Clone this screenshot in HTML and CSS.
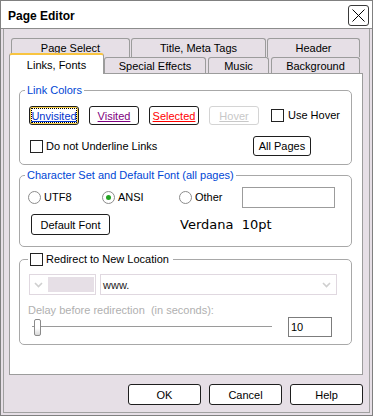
FILE: index.html
```html
<!DOCTYPE html>
<html lang="en">
  <head>
    <meta charset="UTF-8" />
    <title>Page Editor</title>
    <link rel="stylesheet" href="styles.css">
  </head>
  <body>
    <div class="window">
      <div class="titlebar">
        <span class="title">Page Editor</span>
        <span class="close">
          <svg width="19" height="19" viewBox="0 0 19 19">
            <path d="M3.5 3.5 L15.5 15.5 M15.5 3.5 L3.5 15.5" stroke="#000" stroke-width="1" fill="none" />
          </svg>
        </span>
      </div>

      <div class="body">
        <!-- Tab strip: two rows, the active one sits in front -->
        <div class="tabs">
          <div class="tab-row back">
            <div class="tab tab-page">Page Select</div>
            <div class="tab tab-meta">Title, Meta Tags</div>
            <div class="tab tab-header">Header</div>
          </div>
          <div class="tab-row front">
            <div class="tab tab-links active">Links, Fonts</div>
            <div class="tab tab-effects">Special Effects</div>
            <div class="tab tab-music">Music</div>
            <div class="tab tab-bg">Background</div>
          </div>
        </div>

        <div class="panel">
          <fieldset class="group group-links">
            <legend>Link Colors</legend>
            <div class="row row-colors">
              <button class="btn link-btn unvisited focused"><span>Unvisited</span></button>
              <button class="btn link-btn visited"><span>Visited</span></button>
              <button class="btn link-btn selected"><span>Selected</span></button>
              <button class="btn link-btn hover"><span>Hover</span></button>
              <span class="check use-hover"></span>
              <span class="label">Use Hover</span>
            </div>
            <div class="row row-underline">
              <span class="check no-underline"></span>
              <span class="label">Do not Underline Links</span>
              <button class="btn all-pages">All Pages</button>
            </div>
          </fieldset>

          <fieldset class="group group-charset">
            <legend>Character Set and Default Font (all pages)</legend>
            <div class="row row-charset">
              <span class="option opt-utf8"><span class="radio"></span><span class="label">UTF8</span></span>
              <span class="option opt-ansi"><span class="radio on"></span><span class="label">ANSI</span></span>
              <span class="option opt-other"><span class="radio"></span><span class="label">Other</span></span>
              <span class="textbox other-box"></span>
            </div>
            <div class="row row-font">
              <button class="btn default-font">Default Font</button>
              <span class="font-name">Verdana  10pt</span>
            </div>
          </fieldset>

          <fieldset class="group group-redirect">
            <legend><span class="check"></span><span class="label">Redirect to New Location</span></legend>
            <div class="row row-combos">
              <span class="combo combo-proto">
                <svg class="chevron" width="18" height="8" viewBox="0 0 18 8">
                  <polyline points="5,2 8.5,5.5 12,2" stroke="#cfcfcf" stroke-width="1.6" fill="none" />
                </svg>
                <span class="proto-field"></span>
              </span>
              <span class="combo combo-url">
                <span class="url-text">www.</span>
                <svg class="chevron" width="14" height="8" viewBox="0 0 14 8">
                  <polyline points="3,2 6.5,5.5 10,2" stroke="#cfcfcf" stroke-width="1.6" fill="none" />
                </svg>
              </span>
            </div>
            <div class="delay-label">Delay before redirection  (in seconds):</div>
            <div class="row row-slider">
              <span class="slider"><span class="thumb"></span></span>
              <span class="textbox delay-box">10</span>
            </div>
          </fieldset>
        </div>

        <div class="actions">
          <button class="btn">OK</button>
          <button class="btn">Cancel</button>
          <button class="btn">Help</button>
        </div>
      </div>
    </div>
  </body>
</html>
```

FILE: styles.css
```css
* {
  box-sizing: border-box;
}
body {
  margin: 0;
  font-family: "Liberation Sans", Arial, sans-serif;
  font-size: 11px;
  color: #000;
  background: #fff;
}
.window {
  width: 373px;
  height: 416px;
  border: 1px solid #808080;
  background: #e6dfe6;
  display: flex;
  flex-direction: column;
}

/* Title bar */
.titlebar {
  height: 28px;
  flex: none;
  background: #fff;
  border-bottom: 1px solid #8c8c8c;
  display: flex;
  align-items: flex-start;
  justify-content: space-between;
  padding: 0 3px 0 7px;
}
.title {
  margin-top: 8px;
  font-size: 12px;
  font-weight: bold;
  line-height: 14px;
}
.close {
  margin-top: 4px;
  width: 21px;
  height: 21px;
  border: 1px solid #3a3a3a;
  border-radius: 3px;
  display: flex;
}

.body {
  flex: 1;
  margin: 0 2px 2px;
  border: 1px solid #a0a0a0;
  border-top: none;
  display: flex;
  flex-direction: column;
}

/* Tabs */
.tabs {
  padding-top: 9px;
}
.tab-row {
  display: flex;
}
.tab {
  border: 1px solid #9c9c9c;
  border-bottom: none;
  border-radius: 3px 3px 0 0;
  background: #e6dfe6;
  display: flex;
  align-items: center;
  justify-content: center;
  white-space: nowrap;
}
.back {
  height: 19px;
  padding-left: 7px;
  gap: 1px;
}
.back .tab {
  height: 19px;
}
.front {
  height: 20px;
  margin-top: -4px;
  padding-left: 5px;
  align-items: flex-end;
}
.front .tab {
  height: 16px;
  margin-left: 2px;
}
.front .tab.active,
.front .tab.active + .tab {
  margin-left: 0;
}
.front .tab.active {
  height: 21px;
  margin-bottom: -1px;
  background: #fff;
  border-top: 2px solid #f8c440;
  position: relative;
  z-index: 1;
}
.tab-page { width: 119px; }
.tab-meta { width: 135px; }
.tab-header { width: 93px; }
.tab-links { width: 95px; }
.tab-effects { width: 102px; }
.tab-music { width: 61px; }
.tab-bg { width: 89px; }

/* Page */
.panel {
  flex: none;
  margin-left: 5px;
  width: 354px;
  height: 302px;
  border: 1px solid #9c9c9c;
  background: #fff;
  padding: 0 10px 0 9px;
}
.group {
  margin: 0;
  min-width: 0;
  border: 1px solid #a8a8a8;
  border-radius: 5px;
  padding: 9px 9px 8px;
}
.group legend {
  padding: 0 2px;
  margin-left: -4px;
  color: #0046d5;
  line-height: 13px;
}
.group-links {
  margin-top: 10px;
}
.group-charset {
  margin-top: 4px;
  padding: 5px 9px 11px;
}
.group-redirect {
  margin-top: 6px;
  padding: 8px 9px 7px;
}
.group-redirect legend {
  color: #000;
  margin-left: -1px;
  padding: 0 4px 0 2px;
  display: flex;
  align-items: center;
}
.group-redirect legend .label {
  margin-left: 3px;
}

.row {
  display: flex;
  align-items: center;
}
.label {
  white-space: nowrap;
  line-height: 13px;
}

.btn {
  font: inherit;
  color: #000;
  background: #fff;
  border: 1px solid #1e1e1e;
  border-radius: 3px;
  padding: 0;
  white-space: nowrap;
}

.row-colors {
  height: 19px;
}
.link-btn {
  width: 50px;
  height: 19px;
  margin-right: 10px;
}
.link-btn span {
  text-decoration: underline;
}
.unvisited { color: #0033cc; }
.visited { color: #800080; }
.selected { color: #ff0000; }
.hover {
  color: #c8c8c8;
  border-color: #d4d4d4;
}
.focused {
  box-shadow: inset 0 0 0 1px #fbd34a;
  outline: 1px dotted #000;
  outline-offset: -3px;
}

.check {
  width: 13px;
  height: 13px;
  flex: none;
  border: 1px solid #222;
  background: #fff;
  display: inline-block;
}
.use-hover {
  margin-left: 2px;
}
.use-hover + .label {
  margin-left: 4px;
}
.row-underline {
  height: 20px;
  margin-top: 11px;
}
.no-underline {
  margin-left: 1px;
}
.no-underline + .label {
  margin-left: 3px;
}
.all-pages {
  width: 58px;
  height: 20px;
  margin-left: auto;
  margin-right: 31px;
}

/* Character set */
.row-charset {
  height: 21px;
}
.option {
  display: flex;
  align-items: center;
}
.option .label {
  margin-left: 3px;
}
.opt-utf8 { width: 74px; margin-left: -1px; }
.opt-ansi { width: 77px; }
.opt-other { width: 63px; }
.radio {
  width: 13px;
  height: 13px;
  flex: none;
  border-radius: 50%;
  border: 1px solid #8c8c8c;
  background: #fff;
  display: inline-flex;
  align-items: center;
  justify-content: center;
}
.radio.on::after {
  content: "";
  width: 5px;
  height: 5px;
  border-radius: 50%;
  background: #22a322;
}
.textbox {
  border: 1px solid #9c9c9c;
  background: #fff;
  display: flex;
  align-items: center;
}
.other-box {
  width: 93px;
  height: 21px;
}
.row-font {
  height: 21px;
  margin-top: 6px;
}
.default-font {
  width: 79px;
  height: 21px;
  margin-left: 2px;
}
.font-name {
  margin-left: 70px;
  font-family: "DejaVu Sans", Verdana, sans-serif;
  font-size: 13px;
  white-space: pre;
}

/* Redirect */
.row-combos {
  height: 21px;
}
.combo {
  height: 21px;
  border: 1px solid #e0d8e0;
  display: flex;
  align-items: center;
}
.combo-proto {
  width: 67px;
  padding: 2px 1px 2px 0;
}
.proto-field {
  flex: 1;
  align-self: stretch;
  background: #e6dfe6;
}
.chevron {
  flex: none;
}
.combo-url {
  width: 237px;
  margin-left: 4px;
  padding: 0 2px 0 2px;
  justify-content: space-between;
}
.url-text {
  color: #222;
}
.delay-label {
  margin: 9px 0 0 -1px;
  line-height: 13px;
  color: #b0b0b0;
  white-space: pre;
}
.row-slider {
  height: 20px;
}
.slider {
  width: 240px;
  height: 20px;
  margin-left: 3px;
  padding: 2px 0 0 2px;
  background: linear-gradient(#9a9a9a, #9a9a9a) no-repeat 0 9px / 100% 1px;
  display: flex;
  align-items: flex-start;
}
.thumb {
  width: 7px;
  height: 17px;
  border: 1px solid #8a8a8a;
  border-radius: 2px;
  background: linear-gradient(#fff 55%, #d8d8d8);
}
.delay-box {
  width: 44px;
  height: 20px;
  margin-left: 16px;
  padding-left: 2px;
  border-color: #7c7c7c;
}

/* Dialog buttons */
.actions {
  display: flex;
  justify-content: flex-end;
  gap: 8px;
  padding: 9px 6px 0 0;
}
.actions .btn {
  width: 73px;
  height: 21px;
}
```
